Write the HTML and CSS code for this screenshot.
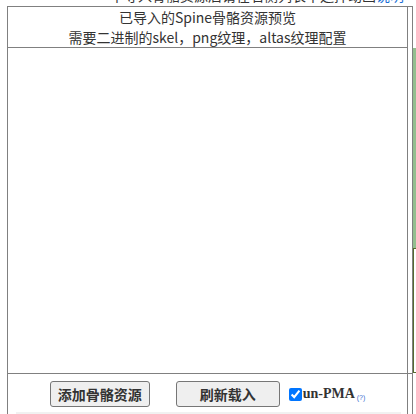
FILE: index.html
```html
<!DOCTYPE html>
<html>
<head>
<meta charset="utf-8">
<link rel="stylesheet" href="styles.css">
</head>
<body>
<div class="topnote"><span class="note-text">中导入骨骼资源后请在右侧列表中选择动画<span class="note-link">说明</span></span></div>
<div class="layout">
  <div class="panel">
    <div class="panel-head">
      <div>已导入的Spine骨骼资源预览</div>
      <div>需要二进制的skel，png纹理，altas纹理配置</div>
    </div>
    <div class="panel-body"></div>
    <div class="panel-foot">
      <button class="btn btn-add">添加骨骼资源</button>
      <button class="btn btn-reload">刷新载入</button>
      <label class="pma"><input type="checkbox" checked><span class="pma-text">un-PMA</span><span class="pma-help">(?)</span></label>
    </div>
    <div class="strip"></div>
  </div>
  <div class="narrow"><div class="narrow-inner"></div></div>
  <div class="side">
    <div class="side-green"></div>
    <div class="side-box"></div>
  </div>
</div>
</body>
</html>
```
FILE: styles.css
```css
html, body {
  margin: 0;
  padding: 0;
  background: #fff;
  overflow: hidden;
}
body {
  width: 416px;
  height: 414px;
  font-family: "Noto Sans CJK SC", "Microsoft YaHei", sans-serif;
  color: #333;
}
.topnote {
  height: 6px;
  overflow: hidden;
  display: flex;
  align-items: flex-end;
  justify-content: flex-end;
  padding-right: 12px;
}
.note-text {
  font-size: 14px;
  line-height: 17px;
  color: #333;
  white-space: nowrap;
  margin-bottom: 2px;
}
.note-link {
  color: #1a6fd6;
}
.layout {
  display: flex;
  align-items: flex-start;
  margin-left: 7px;
}
.panel {
  width: 399px;
  border-left: 1px solid #808080;
  border-top: 1px solid #808080;
  border-right: 1px solid #808080;
  flex: none;
}
.panel-head {
  height: 40px;
  border-bottom: 1px solid #808080;
  text-align: center;
  font-size: 14px;
  line-height: 20px;
  color: #333;
}
.panel-body {
  height: 325px;
  border-bottom: 1px solid #808080;
}
.panel-foot {
  display: flex;
  justify-content: center;
  align-items: center;
  padding: 7px 0 5px 0;
}
.btn {
  height: 26px;
  box-sizing: border-box;
  background: #efefef;
  border: 1px solid #767676;
  border-radius: 3px;
  font-family: "Noto Sans CJK SC", sans-serif;
  font-weight: bold;
  font-size: 14px;
  color: #333;
  padding: 0;
  line-height: 22px;
}
.btn-add {
  width: 100px;
}
.btn-reload {
  width: 104px;
  margin-left: 26px;
}
.pma {
  display: flex;
  align-items: center;
  margin-left: 9px;
}
.pma input {
  margin: 0 1px 0 0;
  width: 13px;
  height: 13px;
}
.pma-text {
  font-family: "Liberation Serif", serif;
  font-weight: bold;
  font-size: 14px;
  color: #333;
}
.pma-help {
  font-family: "Liberation Sans", sans-serif;
  font-size: 7px;
  color: #3a6fd0;
  margin-left: 2px;
  margin-top: 6px;
}
.strip {
  height: 4px;
  margin-left: 8px;
  margin-right: 6px;
  background: #f1f1f1;
}
.narrow {
  width: 4px;
  flex: none;
  border-top: 1px solid #808080;
  border-right: 1px solid #808080;
  height: 420px;
}
.narrow-inner {
  height: 366px;
  border-bottom: 1px solid #808080;
}
.side {
  flex: none;
  width: 20px;
  margin-top: 42px;
}
.side-green {
  height: 200px;
  background: #93bf8f;
}
.side-box {
  height: 123px;
  border: 1px solid #556b2f;
  background: #fff;
}
```
